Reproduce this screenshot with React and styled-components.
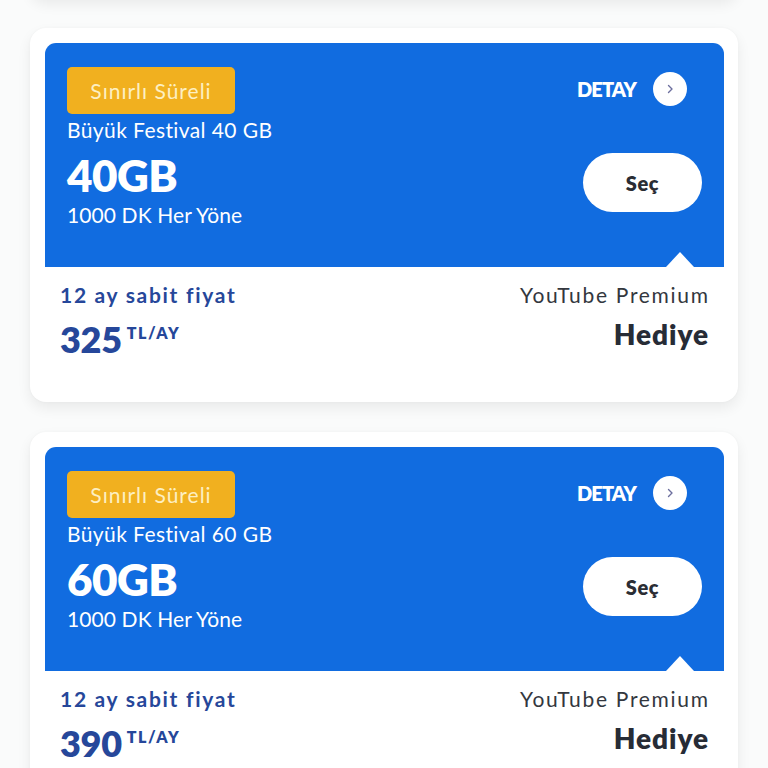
import React from "react";
import styled, { createGlobalStyle } from "styled-components";

const GlobalStyle = createGlobalStyle`
  html, body {
    margin: 0;
    padding: 0;
    background: #fafbfb;
    font-family: "Lato", "Noto Sans", sans-serif;
    overflow: hidden;
  }
`;

const Page = styled.div`
  display: flex;
  flex-direction: column;
  gap: 30px;
  padding: 0 30px;
`;

const CardTail = styled.div`
  height: 20px;
  margin-top: -22px;
  background: #ffffff;
  border-radius: 0 0 16px 16px;
  box-shadow: 0 6px 14px rgba(0, 0, 0, 0.07), 0 0 3px rgba(0, 0, 0, 0.03);
`;

const Card = styled.div`
  background: #ffffff;
  border-radius: 16px;
  padding: 15px 14px 0 15px;
  height: 374px;
  box-sizing: border-box;
  box-shadow: 0 6px 14px rgba(0, 0, 0, 0.07), 0 0 3px rgba(0, 0, 0, 0.03);
`;

const BluePanel = styled.div`
  position: relative;
  background: #116ce0;
  border-radius: 11px 11px 0 0;
  height: 224px;
  display: flex;
  justify-content: space-between;
  box-sizing: border-box;
`;

const Notch = styled.div`
  position: absolute;
  right: 30px;
  bottom: 0;
  width: 0;
  height: 0;
  border-left: 14px solid transparent;
  border-right: 14px solid transparent;
  border-bottom: 15px solid #ffffff;
`;

const LeftCol = styled.div`
  display: flex;
  flex-direction: column;
  align-items: flex-start;
  padding: 24px 0 0 22px;
`;

const Badge = styled.div`
  width: 168px;
  height: 47px;
  box-sizing: border-box;
  border-radius: 5px;
  background: #f1b01f;
  color: #fdefc2;
  font-size: 21px;
  display: flex;
  align-items: center;
  justify-content: center;
  letter-spacing: 1px;
`;

const Title = styled.div`
  color: #ffffff;
  font-size: 21px;
  line-height: 32px;
  letter-spacing: 0.4px;
`;

const Big = styled.div`
  color: #ffffff;
  font-size: 44px;
  font-weight: 800;
  line-height: 58px;
  letter-spacing: -0.5px;
`;

const Sub = styled.div`
  color: #ffffff;
  font-size: 21px;
  line-height: 22px;
  letter-spacing: 0.1px;
`;

const RightCol = styled.div`
  display: flex;
  flex-direction: column;
  align-items: flex-end;
  padding: 29px 22px 0 0;
`;

const DetailRow = styled.div`
  display: flex;
  align-items: center;
  gap: 17px;
  margin-right: 15px;
`;

const DetailText = styled.span`
  color: #ffffff;
  font-size: 20px;
  font-weight: 800;
  letter-spacing: -0.9px;
`;

const Circle = styled.div`
  width: 34px;
  height: 34px;
  border-radius: 50%;
  background: #ffffff;
  display: flex;
  align-items: center;
  justify-content: center;
`;

const SelectButton = styled.button`
  margin-top: 47px;
  width: 119px;
  height: 59px;
  border: none;
  border-radius: 30px;
  background: #ffffff;
  color: #2a2d34;
  font-family: inherit;
  font-size: 20px;
  font-weight: 800;
  letter-spacing: 0.6px;
  cursor: pointer;
`;

const Bottom = styled.div`
  display: flex;
  justify-content: space-between;
  padding: 14px 16px 0 15px;
`;

const PriceCol = styled.div`
  display: flex;
  flex-direction: column;
`;

const PriceLabel = styled.div`
  color: #26479a;
  font-size: 21px;
  font-weight: 700;
  letter-spacing: 1.7px;
  line-height: 28px;
`;

const PriceRow = styled.div`
  display: flex;
  align-items: flex-start;
  margin-top: 12px;
`;

const Amount = styled.span`
  color: #26479a;
  font-size: 36px;
  font-weight: 800;
  line-height: 36px;
  letter-spacing: -0.3px;
`;

const Unit = styled.span`
  color: #26479a;
  font-size: 16px;
  font-weight: 800;
  margin-left: 5px;
  margin-top: 2px;
  letter-spacing: 1.6px;
`;

const GiftCol = styled.div`
  display: flex;
  flex-direction: column;
  align-items: flex-end;
`;

const GiftLabel = styled.div`
  color: #33373e;
  font-size: 21px;
  letter-spacing: 1.7px;
  line-height: 28px;
  margin-right: -1.7px;
`;

const GiftValue = styled.div`
  color: #272c36;
  font-size: 28px;
  font-weight: 800;
  margin-top: 8px;
  letter-spacing: 0.9px;
  margin-right: -0.9px;
`;

const Chevron = () => (
  <svg width="10" height="12" viewBox="0 0 10 12">
    <path d="M3.5 2.5 L7 6 L3.5 9.5" fill="none" stroke="#6c6f9e" strokeWidth="1.4" strokeLinecap="round" strokeLinejoin="round" />
  </svg>
);

const plans = [
  { gb: 40, price: 325 },
  { gb: 60, price: 390 },
];

const PlanCard = ({ gb, price }) => (
  <Card>
    <BluePanel>
      <LeftCol>
        <Badge>Sınırlı Süreli</Badge>
        <Title>Büyük Festival {gb} GB</Title>
        <Big>{gb}GB</Big>
        <Sub>1000 DK Her Yöne</Sub>
      </LeftCol>
      <RightCol>
        <DetailRow>
          <DetailText>DETAY</DetailText>
          <Circle>
            <Chevron />
          </Circle>
        </DetailRow>
        <SelectButton>Seç</SelectButton>
      </RightCol>
      <Notch />
    </BluePanel>
    <Bottom>
      <PriceCol>
        <PriceLabel>12 ay sabit fiyat</PriceLabel>
        <PriceRow>
          <Amount>{price}</Amount>
          <Unit>TL/AY</Unit>
        </PriceRow>
      </PriceCol>
      <GiftCol>
        <GiftLabel>YouTube Premium</GiftLabel>
        <GiftValue>Hediye</GiftValue>
      </GiftCol>
    </Bottom>
  </Card>
);

export default function App() {
  return (
    <>
      <GlobalStyle />
      <Page>
        <CardTail />
        {plans.map((p) => (
          <PlanCard key={p.gb} {...p} />
        ))}
      </Page>
    </>
  );
}
